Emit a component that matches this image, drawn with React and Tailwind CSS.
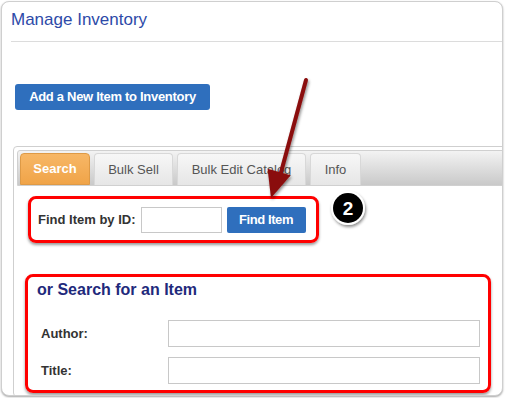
import React from 'react'

const tabs = [
  { label: 'Search', active: true, w: 'w-[70px]' },
  { label: 'Bulk Sell', w: 'w-[79px]' },
  { label: 'Bulk Edit Catalog', w: 'w-[129px]' },
  { label: 'Info', w: 'w-[51px]' },
]

export default function App() {
  return (
    <div className="bg-white w-[505px] h-[398px] font-['Liberation_Sans',Arial,sans-serif]">
      <div className="relative ml-px mt-px w-[502px] h-[395px] border border-[#cfcfcf] rounded-lg bg-white shadow-[0_1px_2px_rgba(0,0,0,0.35)] overflow-hidden">
        {/* Header */}
        <div className="ml-[9px] h-[40px] border-b border-[#dcdcdc] pt-[7px]">
          <h1 className="text-[17px] leading-[21px] text-[#2d4aa8]">Manage Inventory</h1>
        </div>

        <div className="pl-[13px] pt-[42px]">
          <button className="w-[195px] h-[26px] rounded-[3px] bg-[#2f6fbd] text-white text-[13px] font-bold tracking-[-0.3px]">
            Add a New Item to Inventory
          </button>
        </div>

        {/* Tab panel */}
        <div className="ml-[11px] mt-[36px] w-[520px] border border-[#cfcfcf] rounded-[4px] p-[3px]">
          <div className="h-[36px] rounded-t-[3px] border border-[#d0d0d0] bg-gradient-to-b from-[#f3f3f3] to-[#c9c9c9] flex items-end gap-[4px] pl-[2px]">
            {tabs.map((t) => (
              <div
                key={t.label}
                className={
                  t.active
                    ? `${t.w} h-[32px] rounded-t-[4px] border border-[#de9a46] bg-gradient-to-b from-[#f7b766] to-[#f0a448] text-white font-bold text-[13px] flex items-center justify-center`
                    : `${t.w} h-[32px] rounded-t-[4px] border border-[#d8d8d8] border-b-0 bg-gradient-to-b from-[#f7f7f7] to-[#e6e6e6] text-[#555] text-[13px] flex items-center justify-center`
                }
              >
                {t.label}
              </div>
            ))}
          </div>

          <div className="pt-[10px] pl-[11px]">
            <div className="w-[291px] h-[47px] border-[3px] border-[#ff0000] rounded-[8px] shadow-[0_2px_3px_rgba(0,0,0,0.4)] flex items-center pl-[7px]">
              <span className="text-[13px] font-bold text-[#333]">Find Item by ID:</span>
              <input className="ml-[5px] w-[81px] h-[26px] border border-[#c8c8c8] bg-white" />
              <button className="ml-[5px] w-[79px] h-[26px] rounded-[2px] bg-[#2f6fbd] text-white text-[13px] font-bold tracking-[-0.4px]">
                Find Item
              </button>
            </div>
          </div>

          <div className="pt-[31px] pl-[8px]">
            <div className="w-[466px] h-[119px] border-[3px] border-[#ff0000] rounded-[8px] shadow-[0_2px_3px_rgba(0,0,0,0.4)] pl-[9px] pt-[3px]">
              <h2 className="text-[16px] leading-[20px] font-bold text-[#1f2a7c]">or Search for an Item</h2>
              <div className="mt-[20px] flex items-center h-[27px]">
                <span className="w-[131px] pl-[4px] text-[13px] font-bold text-[#333]">Author:</span>
                <input className="w-[312px] h-[27px] border border-[#c8c8c8] bg-white" />
              </div>
              <div className="mt-[10px] flex items-center h-[27px]">
                <span className="w-[131px] pl-[4px] text-[13px] font-bold text-[#333]">Title:</span>
                <input className="w-[312px] h-[27px] border border-[#c8c8c8] bg-white" />
              </div>
            </div>
          </div>
        </div>

        {/* Annotation overlay */}
        <svg className="absolute left-0 top-0 pointer-events-none" width="505" height="398">
          <defs>
            <filter id="sh" x="-20%" y="-20%" width="140%" height="140%">
              <feDropShadow dx="1" dy="2" stdDeviation="1.5" floodColor="#000" floodOpacity="0.45" />
            </filter>
          </defs>
          <g filter="url(#sh)">
            <line x1="304" y1="78" x2="278" y2="174" stroke="#8a0a0a" strokeWidth="4" strokeLinecap="round" />
            <polygon points="269,196 265.6,166.8 288.7,173.2" fill="#8a0a0a" />
          </g>
          <g filter="url(#sh)">
            <circle cx="346" cy="206" r="17" fill="#fff" />
            <circle cx="346" cy="206" r="15" fill="#000" />
          </g>
          <text x="346" y="213" textAnchor="middle" fill="#fff" fontSize="19" fontWeight="bold" fontFamily="Liberation Sans, Arial, sans-serif">2</text>
        </svg>
      </div>
    </div>
  )
}
